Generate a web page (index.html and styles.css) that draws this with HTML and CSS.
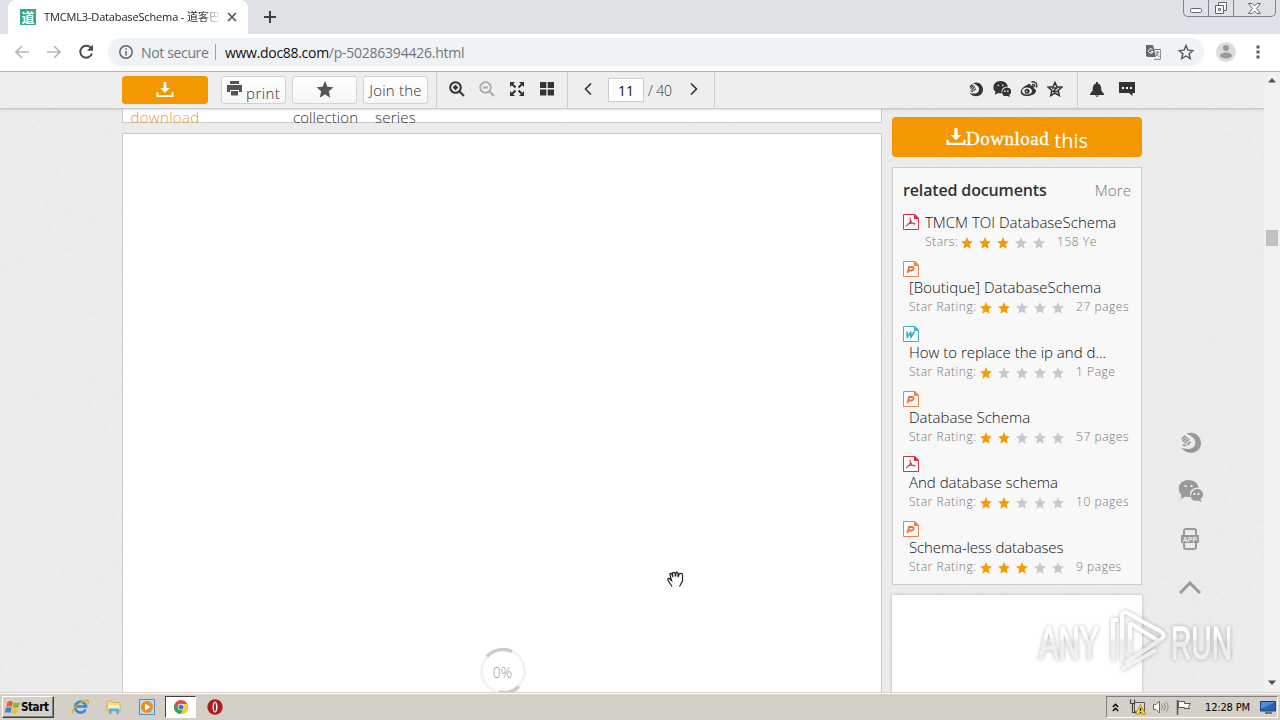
FILE: index.html
```html
<!DOCTYPE html>
<html>
<head>
<meta charset="utf-8">
<title>TMCML3-DatabaseSchema</title>
<link rel="stylesheet" href="styles.css">
</head>
<body>
<svg class="defs" width="0" height="0">
  <symbol id="star" viewBox="0 0 12 12"><path d="M6 0l1.700 4 4.300.4-3.300 2.900 1 4.500L6 9.400l-3.700 2.400 1-4.500L0 4.400l4.300-.4z"/></symbol>
  <symbol id="pdf" viewBox="0 0 16 16"><path d="M.5.500h11l4 4v11H.5z" fill="#fff" stroke="#d9304a"/><path d="M11 0h1l4 4v1h-5z" fill="#d9304a"/><path d="M7 3.500c1.200 3-.5 6.500-4 8.500M7.500 6.500c.7 2 2.300 3.800 5 3.300M4.500 10.200c2-1 4.500-1.500 7.500-.7" fill="none" stroke="#d9304a" stroke-width="1.100"/></symbol>
  <symbol id="ppt" viewBox="0 0 16 16"><path d="M.5.500h11l4 4v11H.5z" fill="#fff" stroke="#f08440"/><path d="M11 0h1l4 4v1h-5z" fill="#f08440"/><path d="M4.500 12l1.600-6h3.200c2.200 0 1.600 3.500-.8 3.500H5.500" fill="none" stroke="#f0703a" stroke-width="1.800"/></symbol>
  <symbol id="doc" viewBox="0 0 16 16"><path d="M.5.500h11l4 4v11H.5z" fill="#fff" stroke="#35b4cc"/><path d="M11 0h1l4 4v1h-5z" fill="#35b4cc"/><path d="M4 5.500l.4 5.500L7.600 6.500 8 11l3.500-5.500" fill="none" stroke="#2baecb" stroke-width="1.600"/></symbol>
  <symbol id="dl" viewBox="0 0 18 18"><path d="M7.500 1h3v6.500H14L9 12.500 4 7.500h3.500z"/><path d="M0 12h2v3h14v-3h2v5H0z"/></symbol>
  <symbol id="swirl" viewBox="0 0 24 24"><path d="M8 2C17-2 24 5 24 12c0 11-14 15-22 5 7 3 15 2 16-5 0-5-5-8-10-10z"/><path d="M3 8l4-4M4 10.500l5-5M6 12.500l5-5M9 14l3.500-3.500M4 14l4 1" fill="none" stroke="currentColor" stroke-width="1.900"/></symbol>
  <symbol id="wechat" viewBox="0 0 24 22"><path d="M10 0c6 0 10 4 10 8-5-1-10 3-8 9-2 0-4 0-5-.5L2 19l1-4C-3 9 1 0 10 0z"/><path d="M18 9c8 0 8 8 4 10l1 3-3.500-1.500C13 22 11 17 13 13c1-2 3-4 5-4z"/><path d="M6 5h2v2H6zM12 5h2v2h-2zM15 13h2v2h-2zM19 13h2v2h-2z" fill="#eee"/></symbol>
</svg>

<div class="tabstrip">
  <div class="tab">
    <span class="favicon">道</span>
    <span class="tab-title"><span class="t-latin">TMCML3-DatabaseSchema - </span>道客巴巴</span>
    <svg class="tab-close" width="10" height="10" viewBox="0 0 10 10"><path d="M1 1l8 8M9 1L1 9" stroke="#555" stroke-width="1.700"/></svg>
  </div>
  <svg class="newtab" width="12" height="12" viewBox="0 0 12 12"><path d="M6 0v12M0 6h12" stroke="#3c4043" stroke-width="2"/></svg>
  <div class="winbtns">
    <span class="wb w1"><svg width="13" height="6" viewBox="0 0 13 6"><rect x=".5" y=".5" width="11" height="4" rx="1" fill="#fff" stroke="#5f6673"/></svg></span>
    <span class="wb w2"><svg width="14" height="13" viewBox="0 0 14 13"><path d="M4.500.5h8v8h-8z" fill="#fff" stroke="#5f6673"/><path d="M1.500 3.500h8v8h-8z" fill="#fff" stroke="#5f6673"/><path d="M4.500 6.500h2v2h-2z" fill="none" stroke="#5f6673"/></svg></span>
    <span class="wb w3"><svg width="13" height="11" viewBox="0 0 13 11"><path d="M.5.500h3.500l2.500 2.500L9 .500h3.500L8.500 5.500l4 5H9L6.500 8 4 10.500H.5l4-5z" fill="#fff" stroke="#5f6673"/></svg></span>
  </div>
</div>

<div class="navbar">
  <svg class="nav-ico" width="16" height="14" viewBox="0 0 16 14"><path d="M15 7H2M8 1L2 7l6 6" fill="none" stroke="#b5b7ba" stroke-width="1.700"/></svg>
  <svg class="nav-ico" width="16" height="14" viewBox="0 0 16 14"><path d="M1 7h13M8 1l6 6-6 6" fill="none" stroke="#b5b7ba" stroke-width="1.700"/></svg>
  <svg class="nav-ico" width="16" height="16" viewBox="0 0 16 16"><path d="M13.200 4.200A6 6 0 1 0 14 9.500" fill="none" stroke="#4a4d51" stroke-width="2"/><path d="M15 .800v6H9z" fill="#4a4d51"/></svg>
  <div class="omnibox">
    <svg width="14" height="14" viewBox="0 0 14 14"><circle cx="7" cy="7" r="6.200" fill="none" stroke="#5f6368" stroke-width="1.500"/><path d="M7 6v4.500M7 3.300v1.500" stroke="#5f6368" stroke-width="1.500"/></svg>
    <span class="insecure">Not secure</span>
    <span class="vline"></span>
    <span class="url"><b>www.doc88.com</b>/p-50286394426.html</span>
    <svg class="translate" width="15" height="15" viewBox="0 0 15 15"><path d="M6 4.500h8.300v9.800H8" fill="#fff" stroke="#777"/><path d="M0 0h7l3 12H1.500L0 11z" fill="#666a6e"/><path d="M6.500 4.500A2.200 2.200 0 1 0 7 6.500H5" fill="none" stroke="#fff" stroke-width="1"/><path d="M9.500 7H13M12 7c0 2-1 3-2 4M10 8l3 4" fill="none" stroke="#777"/></svg>
    <svg width="16" height="16" viewBox="0 0 16 16"><path d="M8 1.500l1.900 4.600 5 .4-3.800 3.200 1.200 4.900L8 12l-4.300 2.600 1.200-4.900L1.100 6.500l5-.4z" fill="none" stroke="#55585c" stroke-width="1.400"/></svg>
  </div>
  <svg class="avatar" width="20" height="20" viewBox="0 0 20 20"><circle cx="10" cy="10" r="10" fill="#dcdcdc"/><circle cx="10" cy="6" r="3" fill="#9a9a9a"/><ellipse cx="10" cy="13.500" rx="6" ry="3" fill="#9a9a9a"/></svg>
  <svg class="dots" width="4" height="14" viewBox="0 0 4 14"><path d="M.5.500h3v3h-3zM.5 5.500h3v3h-3zM.5 10.500h3v3h-3z" fill="#55585c"/></svg>
</div>

<div class="viewport">
  <div class="page">
    <svg class="paper" width="1264" height="620"><filter id="grain"><feTurbulence type="fractalNoise" baseFrequency=".25" numOctaves="2"/><feColorMatrix values="0 0 0 0 .5  0 0 0 0 .5  0 0 0 0 .5  .5 0 0 0 -.15"/></filter><rect width="1264" height="620" filter="url(#grain)" opacity=".3"/></svg>
    <div class="toolbar">
      <div class="btn btn-dl"><svg width="18" height="17" fill="#fff"><use href="#dl"/></svg><br><span class="over">download</span></div>
      <div class="btn btn-print"><svg width="15" height="15" viewBox="0 0 15 15" fill="#555"><path d="M3 0h9v3H3zM0 4h15v7h-3V9H3v2H0zM4 10h7v4.500H4z"/></svg> print</div>
      <div class="btn btn-fav"><svg width="18" height="17" fill="#555"><use href="#star"/></svg><br>collection</div>
      <div class="btn btn-join">Join the<br>series</div>
      <div class="tools zooms">
        <svg width="16" height="16" viewBox="0 0 16 16"><circle cx="6.500" cy="6.500" r="5.300" fill="none" stroke="#333" stroke-width="2"/><path d="M6.500 4v5M4 6.500h5M10.500 10.500l4.500 4.500" stroke="#333" stroke-width="2"/></svg>
        <svg width="16" height="16" viewBox="0 0 16 16"><circle cx="6.500" cy="6.500" r="5.300" fill="none" stroke="#aaa" stroke-width="1.800"/><path d="M4 6.500h5M10.500 10.500l4.500 4.500" stroke="#aaa" stroke-width="2"/></svg>
        <svg width="16" height="16" viewBox="0 0 16 16"><path d="M1 1h5L1 6zM15 1v5l-5-5zM1 15v-5l5 5zM15 15h-5l5-5z" fill="#333"/><path d="M3 3l3.500 3.500M13 3L9.500 6.500M3 13l3.500-3.500M13 13L9.500 9.500" stroke="#333" stroke-width="2"/></svg>
        <svg width="16" height="16" viewBox="0 0 16 16"><path d="M1 1h6.300v6H1zM8.700 1H15v6H8.700zM1 8.500h6.300v6H1zM8.700 8.500H15v6H8.700z" fill="#333"/></svg>
      </div>
      <div class="tools pager">
        <svg width="8" height="12" viewBox="0 0 8 12"><path d="M7 .5L1.500 6 7 11.500" fill="none" stroke="#333" stroke-width="1.600"/></svg>
        <span class="pageno">11</span>
        <span class="total">/ 40</span>
        <svg width="8" height="12" viewBox="0 0 8 12"><path d="M1 .5L6.500 6 1 11.500" fill="none" stroke="#333" stroke-width="1.600"/></svg>
      </div>
      <div class="tools share">
        <svg width="17" height="15"><use href="#swirl"/></svg>
        <svg width="18" height="16"><use href="#wechat"/></svg>
        <svg width="18" height="16" viewBox="0 0 18 16"><path d="M7 4c3-2 4-1 3.500 1 3-1 4 0 3 2 6 3 0 8-6 8-9 0-9-7-.5-11z" fill="#333"/><ellipse cx="7" cy="10" rx="5" ry="3.600" fill="#eee"/><circle cx="7" cy="10.300" r="2.500" fill="#333"/><circle cx="6.500" cy="10.500" r=".8" fill="#eee"/><path d="M11.500 1c4-1 6 2 5 5.500M12 3.500c2-.5 3 .8 2.500 2.500" fill="none" stroke="#333" stroke-width="1.400"/></svg>
        <svg width="16" height="16" viewBox="0 0 16 16"><path d="M8 1.500l1.900 4.300 5 .4-3.800 3.200 1.200 5.200L8 12l-4.300 2.600 1.200-5.200L1.100 6.200l5-.4z" fill="none" stroke="#333" stroke-width="1.500"/><path d="M5 7h5l-4 3.500h5" fill="none" stroke="#333" stroke-width="1.300"/></svg>
      </div>
      <div class="tools alerts">
        <svg width="14" height="15" viewBox="0 0 14 15"><path d="M6 0h2v1.500c3 1 3.300 4 3.300 7L14 12v1H0v-1l2.700-3.500c0-3 .3-6 3.300-7zM5 13.500h4L7 15z" fill="#333"/></svg>
        <svg width="16" height="14" viewBox="0 0 16 14"><path d="M0 0h16v11h-2.500v3l-3.500-3H0z" fill="#333"/><path d="M3 5h2v2H3zM7 5h2v2H7zM11 5h2v2h-2z" fill="#fff"/></svg>
      </div>
    </div>

    <div class="content">
      <div class="reader">
        <div class="sheet sheet-prev"></div>
        <div class="sheet sheet-cur">
          <div class="loading">
            <svg class="ring" width="48" height="48" viewBox="0 0 48 48"><circle cx="24" cy="24" r="21.500" fill="none" stroke="#f3f3f3" stroke-width="3"/><path d="M8 9.500A21.500 21.500 0 0 1 33 4.500M40 39.500A21.500 21.500 0 0 1 20 45" fill="none" stroke="#ccc" stroke-width="3.500"/></svg>
            <span>0%</span>
          </div>
        </div>
      </div>
      <div class="side">
        <div class="bigdl"><svg width="20" height="19" fill="#fff"><use href="#dl"/></svg><span class="serif">Download</span><span class="sans">this</span></div>
        <div class="related">
          <div class="rel-head"><b>related documents</b><span>More</span></div>
          <div class="item first">
            <svg class="type" width="16" height="16"><use href="#pdf"/></svg>
            <div class="txt"><div class="name">TMCM TOI DatabaseSchema</div>
            <div class="meta"><span class="lbl">Stars:</span><span class="stars"><svg class="on"><use href="#star"/></svg><svg class="on"><use href="#star"/></svg><svg class="on"><use href="#star"/></svg><svg><use href="#star"/></svg><svg><use href="#star"/></svg></span><span>158 Ye</span></div></div>
          </div>
          <div class="item">
            <svg class="type" width="16" height="16"><use href="#ppt"/></svg>
            <div class="txt"><div class="name">[Boutique] DatabaseSchema</div>
            <div class="meta"><span class="lbl">Star Rating:</span><span class="stars"><svg class="on"><use href="#star"/></svg><svg class="on"><use href="#star"/></svg><svg><use href="#star"/></svg><svg><use href="#star"/></svg><svg><use href="#star"/></svg></span><span>27 pages</span></div></div>
          </div>
          <div class="item">
            <svg class="type" width="16" height="16"><use href="#doc"/></svg>
            <div class="txt"><div class="name">How to replace the ip and d...</div>
            <div class="meta"><span class="lbl">Star Rating:</span><span class="stars"><svg class="on"><use href="#star"/></svg><svg><use href="#star"/></svg><svg><use href="#star"/></svg><svg><use href="#star"/></svg><svg><use href="#star"/></svg></span><span>1 Page</span></div></div>
          </div>
          <div class="item">
            <svg class="type" width="16" height="16"><use href="#ppt"/></svg>
            <div class="txt"><div class="name">Database Schema</div>
            <div class="meta"><span class="lbl">Star Rating:</span><span class="stars"><svg class="on"><use href="#star"/></svg><svg class="on"><use href="#star"/></svg><svg><use href="#star"/></svg><svg><use href="#star"/></svg><svg><use href="#star"/></svg></span><span>57 pages</span></div></div>
          </div>
          <div class="item">
            <svg class="type" width="16" height="16"><use href="#pdf"/></svg>
            <div class="txt"><div class="name">And database schema</div>
            <div class="meta"><span class="lbl">Star Rating:</span><span class="stars"><svg class="on"><use href="#star"/></svg><svg class="on"><use href="#star"/></svg><svg><use href="#star"/></svg><svg><use href="#star"/></svg><svg><use href="#star"/></svg></span><span>10 pages</span></div></div>
          </div>
          <div class="item">
            <svg class="type" width="16" height="16"><use href="#ppt"/></svg>
            <div class="txt"><div class="name tight">Schema-less databases</div>
            <div class="meta"><span class="lbl">Star Rating:</span><span class="stars"><svg class="on"><use href="#star"/></svg><svg class="on"><use href="#star"/></svg><svg class="on"><use href="#star"/></svg><svg><use href="#star"/></svg><svg><use href="#star"/></svg></span><span>9 pages</span></div></div>
          </div>
        </div>
        <div class="adbox"></div>
      </div>
    </div>

    <div class="floats">
      <svg width="24" height="22"><use href="#swirl"/></svg>
      <svg width="25" height="22"><use href="#wechat"/></svg>
      <svg width="18" height="22" viewBox="0 0 18 22"><path d="M3 7V3c0-1 .5-2 2-2h8c1.500 0 2 1 2 2v4M3 15v4c0 1 .5 2 2 2h8c1.500 0 2-1 2-2v-4" fill="none" stroke="#999" stroke-width="2"/><rect y="7" width="18" height="8" fill="#999"/><text x="9" y="14" class="app">APP</text></svg>
      <svg class="totop" width="22" height="13" viewBox="0 0 22 13"><path d="M1 12L11 2l10 10" fill="none" stroke="#999" stroke-width="3"/></svg>
    </div>
    <svg class="hand" width="17" height="17" viewBox="0 0 17 17"><path d="M5 15.500L1.500 10C0 8 1.500 6.500 3 8l1.500 1.500L3 4C2.500 2 4.500 2 5 3.500L6 6 5.500 2.500C5.500 1 7.500 1 8 2.500L8.500 5.500 9 2c.5-1.500 2-1 2 .5v3.500l1-2.500c.5-1.500 4-1.500 3.500.5L15.500 10 12.500 15.500" fill="#fff" stroke="#222" stroke-width="1.200"/></svg>
  </div>
  <div class="scroll">
    <svg width="8" height="5" viewBox="0 0 8 5"><path d="M0 4.500L4 0l4 4.500z" fill="#505050"/></svg>
    <div class="thumb"></div>
    <svg width="8" height="5" viewBox="0 0 8 5"><path d="M0 .5h8L4 5z" fill="#505050"/></svg>
  </div>
</div>

<svg class="mark" width="220" height="80" viewBox="0 0 220 80">
  <linearGradient id="fade" gradientUnits="userSpaceOnUse" x1="0" y1="5" x2="0" y2="66"><stop offset=".48" stop-color="#fff"/><stop offset=".55" stop-color="#ececec"/><stop offset="1" stop-color="#f4f4f4"/></linearGradient>
  <text x="9" y="56" textLength="60" lengthAdjust="spacingAndGlyphs">ANY</text>
  <text x="141" y="56" textLength="61" lengthAdjust="spacingAndGlyphs">RUN</text>
  <path d="M83 58V17h5M92 58V14c0-5 3-6 7-3l31 17c5 3 5 6 0 9L95 60M100 20v30M100 20l27 17M92 66l34-19" fill="none" stroke="url(#fade)" stroke-width="4"/>
</svg>

<div class="taskbar">
  <div class="start"><svg width="16" height="15" viewBox="0 0 16 15"><path d="M2.500 2C4.500.5 6 .800 8 2L6.800 7C5 6 3 6 1.200 7z" fill="#e8622c"/><path d="M9 2.300c2 1 4 1 6-.3l-1.300 5c-2 1.200-4 1.200-6 .300z" fill="#85b63a"/><path d="M1 8c2-1.200 4-1 5.700 0l-1.300 5c-2-1.200-4-1-5.700 0z" fill="#3d82cf"/><path d="M7.600 8.300c2 1 4 1 6-.3l-1.300 5c-2 1.300-4 1.300-6 .3z" fill="#f6c02c"/></svg><span>Start</span></div>
  <div class="apps">
    <svg width="17" height="16" viewBox="0 0 17 16"><path d="M13.500 10.500A5.500 5.500 0 1 1 14 7.500H4" fill="none" stroke="#2f8ad8" stroke-width="2.600"/><path d="M1 14.500C-1 11 8 1 16 1.500c1 1 0 3-1 4" fill="none" stroke="#d9a928" stroke-width="1.300"/></svg>
    <svg width="16" height="16" viewBox="0 0 16 16"><path d="M1 2h5l1 1.500h7V12H1z" fill="#f5dc82" stroke="#d5b45a"/><path d="M2.500 6h11v4h-11z" fill="#fbf0b6"/><path d="M3 15V9.500h10V15h-2.500v-3h-5v3z" fill="#5aaede"/></svg>
    <svg width="16" height="16" viewBox="0 0 16 16"><path d="M.5.500h15v15H.5z" fill="#bcdcf2" stroke="#4e90c4"/><circle cx="8" cy="8" r="6" fill="#f28a1c"/><path d="M6 4.500v7L11.500 8z" fill="#fff"/></svg>
    <span class="active"><svg width="14" height="14" viewBox="0 0 14 14"><circle cx="7" cy="7" r="7" fill="#e04a3c"/><path d="M1 3.500A7 7 0 0 0 6.500 14L9.500 8.500 4 8z" fill="#32a350"/><path d="M13.300 4H7l2.500 5-3 5A7 7 0 0 0 13.300 4z" fill="#fbcb34"/><circle cx="7" cy="7" r="3.300" fill="#fff"/><circle cx="7" cy="7" r="2.600" fill="#3e79d8"/></svg></span>
    <svg class="opera" width="16" height="16" viewBox="0 0 16 16"><circle cx="8" cy="8" r="7.700" fill="#b5181c"/><ellipse cx="8" cy="8" rx="2.500" ry="5.500" fill="#fff"/><ellipse cx="8" cy="8" rx=".9" ry="4.500" fill="#8e1014"/></svg>
  </div>
  <div class="tray">
    <svg width="7" height="9" viewBox="0 0 7 9"><path d="M.8 4l2.700-2.700L6.200 4M.8 8l2.700-2.700L6.200 8" fill="none" stroke="#000" stroke-width="1.400"/></svg>
    <svg width="17" height="16" viewBox="0 0 17 16"><path d="M5.500 3.500h10v9h-10z" fill="#d8dcd8" stroke="#555"/><path d="M1.500.500v4h4v-4M3.500 4.500v9h5" fill="none" stroke="#444" stroke-width="1.200"/><path d="M11.500 5.500L16.500 15h-10z" fill="#ffd62a" stroke="#b8900c"/><path d="M11.500 9v3M11.500 13v1" stroke="#000" stroke-width="1.300"/></svg>
    <svg width="16" height="14" viewBox="0 0 16 14"><path d="M.5 4.500H3L6.500 1v12L3 9.500H.5z" fill="#fff" stroke="#666"/><path d="M8.500 4.500c1.300 1.500 1.300 3.500 0 5M10.500 3c2.300 2.500 2.300 5.500 0 8M12.500 1.500c3.500 3.500 3.500 7.500 0 11" fill="none" stroke="#888"/></svg>
    <svg width="16" height="15" viewBox="0 0 16 15"><path d="M1.500 0v15" stroke="#555" stroke-width="1.500"/><path d="M2.500 1.500h6v2h6l-2 3 1 2h-5v-1h-6z" fill="#fff" stroke="#555"/></svg>
    <span class="clock">12:28 PM</span>
    <svg class="desk" width="16" height="13" viewBox="0 0 16 13"><path d="M.5.500h15v9.500H.5z" fill="#2a62b8" stroke="#173d7d"/><path d="M1 1h14L1 8z" fill="#4b8ede"/><path d="M5 12h7" stroke="#555" stroke-width="1.500"/></svg>
  </div>
</div>
</body>
</html>
```
FILE: styles.css
```css
* { box-sizing: border-box; }
body { margin: 0; width: 1280px; height: 720px; overflow: hidden; position: relative; display: flex; flex-direction: column; font-family: "Open Sans", "Noto Sans", "Noto Sans CJK SC", sans-serif; color: #333; }
svg { display: block; flex: none; }
.defs { position: absolute; }

/* browser chrome */
.tabstrip { height: 34px; background: #dee1e6; display: flex; flex: none; padding-left: 8px; }
.tab { width: 240px; background: #fff; border-radius: 8px 8px 0 0; display: flex; align-items: center; padding-left: 12px; }
.favicon { width: 16px; height: 16px; background: #35a595; color: #fff; font: bold 13px/15px "Noto Sans CJK SC", sans-serif; text-align: center; margin-right: 8px; flex: none; }
.tab-title { width: 175px; overflow: hidden; white-space: nowrap; font-size: 11px; line-height: 18px; color: #222; -webkit-mask-image: linear-gradient(90deg, #000 155px, transparent 178px); }
.t-latin { letter-spacing: -.15px; }
.tab-close { margin-left: 8px; }
.newtab { margin: 11px 0 0 16px; }
.winbtns { margin-left: auto; margin-right: 4px; height: 17px; display: flex; border: 1px solid #7d8593; border-top: 0; border-radius: 0 0 5px 5px; }
.wb { display: flex; justify-content: center; align-items: center; border-right: 1px solid #7d8593; }
.w1 { width: 25px; padding-top: 5px; }
.w2 { width: 25px; }
.w3 { width: 41px; border: 0; }
.navbar { height: 38px; flex: none; background: #fff; border-bottom: 1px solid #b3b5b3; display: flex; align-items: center; padding: 0 0 1px 14px; }
.nav-ico { margin-right: 16px; }
.omnibox { width: 1096px; height: 28px; margin-left: -2px; border-radius: 14px; background: #f0f3f6; display: flex; align-items: center; padding: 0 10px 0 11px; font-size: 14px; color: #70757a; }
.insecure { margin-left: 8px; width: 67px; white-space: nowrap; letter-spacing: -.35px; }
.vline { width: 1px; height: 16px; background: #9aa0a6; margin: 0 9px 0 7px; }
.url { white-space: nowrap; letter-spacing: -.24px; }
.url b { font-weight: normal; letter-spacing: -.3px; color: #111; }
.translate { margin-left: auto; margin-right: 17px; }
.avatar { margin-left: 12px; }
.dots { margin-left: 20px; }

.viewport { height: 620px; flex: none; display: flex; }
.page { width: 1264px; background: #ededed; overflow: hidden; position: relative; }
.paper { position: absolute; left: 0; top: 0; }
.scroll { width: 16px; background: #f1f1f1; display: flex; flex-direction: column; align-items: center; padding: 6px 0 7px; }
.thumb { width: 12px; height: 16px; background: #c1c1c1; margin: 147px 0 auto; }

/* top toolbar */
.toolbar { height: 37px; position: relative; z-index: 2; background: #eee; border-bottom: 1px solid #c8c8c8; box-shadow: 0 1px 2px rgba(0,0,0,.12); display: flex; padding-left: 122px; color: #333; }
.btn { height: 28px; margin-top: 4px; border: 1px solid #d3d3d3; border-radius: 3px; background: linear-gradient(#fff, #f6f6f6); text-align: center; font-size: 15px; font-weight: 300; color: #333; line-height: 27px; white-space: nowrap; }
.btn svg { display: inline-block; vertical-align: middle; margin-top: -5px; }
.btn-dl { width: 86px; background: #f39800; border-color: #f39800; margin-right: 13px; }
.over { color: #e59a3c; letter-spacing: .3px; }
.btn-print { width: 65px; margin-right: 6px; line-height: 33px; letter-spacing: .4px; }
.btn-print svg { margin-top: -12px; }
.btn-fav { width: 65px; margin-right: 6px; letter-spacing: .1px; }
.btn-join { width: 65px; margin-right: 8px; letter-spacing: .2px; }
.tools { height: 36px; border-left: 1px solid #ccc; display: flex; align-items: center; padding-bottom: 2px; }
.zooms { width: 131px; padding-left: 12px; gap: 14px; }
.pager { width: 148px; padding-left: 16px; border-right: 1px solid #ccc; }
.pageno { width: 36px; height: 24px; margin: 2px 0 0 16px; background: #fff; border: 1px solid #ccc; font-size: 14px; line-height: 24px; text-align: center; color: #111; }
.total { width: 30px; margin: 2px 12px 0 4px; font-size: 14px; white-space: nowrap; letter-spacing: -.1px; color: #333; line-height: 24px; padding-top: 2px; font-weight: 300; }
.share { margin-left: 252px; width: 110px; border: 0; gap: 9px; }
.alerts { padding-left: 12px; gap: 15px; }

/* document + sidebar */
.content { display: flex; gap: 10px; padding-left: 122px; height: 583px; position: relative; }
.reader { width: 760px; }
.sheet { background: #fff; border: 1px solid #c9c9c9; }
.sheet-prev { height: 14px; border-top: 0; margin-bottom: 10px; }
.sheet-cur { height: 600px; padding: 513px 0 0 1px; }
.loading { width: 48px; height: 48px; margin: 0 auto; position: relative; text-align: center; font-size: 14px; font-weight: 300; color: #999; line-height: 51px; }
.ring { position: absolute; left: 0; top: 0; }
.side { width: 250px; padding-top: 8px; }
.bigdl { height: 40px; background: #f39800; border-radius: 4px; display: flex; padding: 10px 0 0 54px; color: #fff; white-space: nowrap; }
.serif { font: 19px/23px "Liberation Serif", serif; letter-spacing: .5px; -webkit-text-stroke: .3px #fff; }
.sans { font-size: 20px; line-height: 27px; margin-left: 5px; }
.related { height: 418px; margin: 10px 0; border: 1px solid #ccc; background: #f8f8f8; padding: 10px 10px 0; }
.rel-head { display: flex; justify-content: space-between; height: 36px; line-height: 25px; font-size: 16px; }
.rel-head b { font-weight: 600; letter-spacing: -.15px; }
.rel-head span { font-size: 15px; font-weight: 300; color: #777; letter-spacing: .1px; }
.item { height: 65px; }
.item .txt { padding-left: 6px; }
.first { height: 47px; display: flex; }
.type { margin-bottom: 1px; }
.name { height: 20px; line-height: 18px; font-size: 15px; white-space: nowrap; color: #111; font-weight: 300; }
.first .name { line-height: 17px; height: 19px; }
.tight { letter-spacing: -.12px; }
.meta { display: flex; height: 18px; line-height: 18px; font-size: 12px; color: #777; font-weight: 300; white-space: nowrap; letter-spacing: .55px; }
.lbl { width: 71px; }
.first .lbl { width: 36px; }
.stars { display: flex; gap: 6px; width: 96px; padding-top: 4px; }
.stars svg { width: 12px; height: 12px; fill: #c8c8c8; }
.stars .on { fill: #f59a00; }
.adbox { height: 120px; background: #fff; box-shadow: 0 0 3px rgba(0,0,0,.25); }

.share svg { fill: currentColor; }
.floats { position: absolute; left: 1177px; top: 360px; width: 26px; display: flex; flex-direction: column; align-items: center; gap: 26px; color: #999; fill: #999; }
.totop { margin-top: 5px; }
.app { font: bold 7px "Liberation Sans", sans-serif; fill: #eee; text-anchor: middle; }
.hand { position: absolute; left: 667px; top: 499px; }
.mark { position: absolute; left: 1030px; top: 603px; opacity: .9; filter: drop-shadow(0 0 2px rgba(0,0,0,.3)); }
.mark text { font: 47px "Liberation Sans", sans-serif; fill: url(#fade); stroke: url(#fade); stroke-width: 1.5px; }

/* windows taskbar */
.taskbar { height: 28px; flex: none; background: #d4d0c8; border-top: 1px solid #d4d0c8; box-shadow: inset 0 1px #fff; display: flex; padding: 3px 2px 2px; position: relative; }
.start { width: 52px; height: 22px; border: 1px solid; border-color: #fff #404040 #404040 #fff; box-shadow: inset -1px -1px #808080; display: flex; align-items: center; padding-left: 2px; font: bold 11.5px "DejaVu Sans Condensed", "DejaVu Sans", sans-serif; color: #000; }
.start span { margin-left: 0; letter-spacing: -.4px; }
.apps { display: flex; align-items: center; margin-left: 18px; gap: 17px; }
.active { width: 31px; height: 22px; background: #fff; border: 1px solid; border-color: #404040 #fff #fff #404040; display: flex; align-items: center; justify-content: center; margin: 0 -7px; }
.opera { margin-left: 1px; }
.tray { margin-left: auto; width: 172px; height: 22px; border: 1px solid; border-color: #808080 #fff #fff #808080; display: flex; align-items: center; padding-left: 5px; color: #000; }
.tray svg { margin-right: 7px; }
.tray svg:first-child { margin-right: 10px; }
.clock { font: 11px "DejaVu Sans Condensed", sans-serif; letter-spacing: -.15px; white-space: nowrap; width: 46px; margin: 0 9px 0 6px; }
.tray .desk { margin-right: 0; }
```
